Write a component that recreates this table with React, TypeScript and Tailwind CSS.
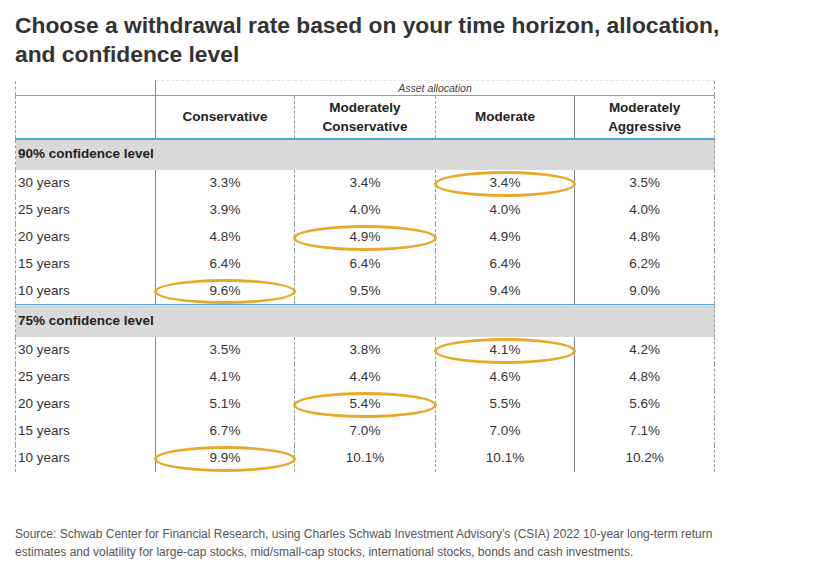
import React from "react";

type Row = { label: string; values: string[]; circled?: number };

const groups: { title: string; rows: Row[] }[] = [
  {
    title: "90% confidence level",
    rows: [
      { label: "30 years", values: ["3.3%", "3.4%", "3.4%", "3.5%"], circled: 2 },
      { label: "25 years", values: ["3.9%", "4.0%", "4.0%", "4.0%"] },
      { label: "20 years", values: ["4.8%", "4.9%", "4.9%", "4.8%"], circled: 1 },
      { label: "15 years", values: ["6.4%", "6.4%", "6.4%", "6.2%"] },
      { label: "10 years", values: ["9.6%", "9.5%", "9.4%", "9.0%"], circled: 0 },
    ],
  },
  {
    title: "75% confidence level",
    rows: [
      { label: "30 years", values: ["3.5%", "3.8%", "4.1%", "4.2%"], circled: 2 },
      { label: "25 years", values: ["4.1%", "4.4%", "4.6%", "4.8%"] },
      { label: "20 years", values: ["5.1%", "5.4%", "5.5%", "5.6%"], circled: 1 },
      { label: "15 years", values: ["6.7%", "7.0%", "7.0%", "7.1%"] },
      { label: "10 years", values: ["9.9%", "10.1%", "10.1%", "10.2%"], circled: 0 },
    ],
  },
];

// right border for each value column (style set per side so bottom borders stay solid)
const colBorders = [
  "border-r [border-right-style:dashed] border-r-[#9a9a9a]",
  "border-r [border-right-style:dashed] border-r-[#9a9a9a]",
  "border-r [border-right-style:solid] border-r-[#7d8790]",
  "",
];

export default function App() {
  return (
    <div className="w-[817px] h-[572px] bg-white text-[#333] font-['Liberation_Sans',Arial,sans-serif] overflow-hidden">
      <h1 className="pl-[15px] pt-[11px] text-[22.8px] leading-[29px] font-bold text-[#333]">
        Choose a withdrawal rate based on your time horizon, allocation,
        <br />
        and confidence level
      </h1>

      <table className="ml-[15px] mt-[11px] w-[699px] table-fixed border-collapse text-[13.5px] border-l border-r border-dashed border-[#9a9a9a]">
        <colgroup>
          <col className="w-[140px]" />
          <col className="w-[139px]" />
          <col className="w-[141px]" />
          <col className="w-[139px]" />
          <col className="w-[140px]" />
        </colgroup>
        <thead>
          <tr className="h-[15px]">
            <th className="border-r border-solid border-r-[#7d8790] border-b border-b-[#5aaed6] p-0" />
            <th
              colSpan={4}
              className="p-0 border-t [border-top-style:dashed] border-t-[#e4e4e4] border-b border-b-[#5aaed6] text-[10.5px] leading-[13px] italic font-normal text-[#444] text-center"
            >
              Asset allocation
            </th>
          </tr>
          <tr className="h-[43px]">
            <th className="p-0 border-r border-solid border-r-[#7d8790] border-b-2 border-b-[#4aa6d6]" />
            {["Conservative", "Moderately\nConservative", "Moderate", "Moderately\nAggressive"].map((h, i) => (
              <th
                key={h}
                className={`p-0 font-bold text-center leading-[19px] whitespace-pre-line text-[#222] border-b-2 [border-bottom-style:solid] border-b-[#4aa6d6] ${colBorders[i]}`}
              >
                {h}
              </th>
            ))}
          </tr>
        </thead>
        {groups.map((g, gi) => (
          <tbody key={g.title}>
            <tr className={`${gi > 0 ? "h-[32px]" : "h-[31px]"} bg-[#d9d9d9]`}>
              <td
                colSpan={5}
                className={`pl-[2px] font-bold text-[#222] ${gi > 0 ? "border-t [border-top-style:solid] border-t-[#5aaed6]" : ""}`}
              >
                {g.title}
              </td>
            </tr>
            {g.rows.map((r) => (
              <tr key={r.label} className="h-[27px]">
                <td className="pl-[2px] border-r border-solid border-r-[#7d8790] text-[#333]">{r.label}</td>
                {r.values.map((v, i) => (
                  <td key={i} className={`relative text-center text-[#333] ${colBorders[i]}`}>
                    {r.circled === i && (
                      <span className="absolute left-[-2px] right-[-2px] top-[1px] bottom-[0px] rounded-[50%] border-[3px] border-[#e9a82b]" />
                    )}
                    <span className="relative">{v}</span>
                  </td>
                ))}
              </tr>
            ))}
          </tbody>
        ))}
      </table>

      <div className="pl-[15px] mt-[53px] text-[12px] leading-[18px] text-[#555]">
        <p>
          Source: Schwab Center for Financial Research, using Charles Schwab Investment Advisory’s (CSIA) 2022 10-year long-term return
        </p>
        <p>estimates and volatility for large-cap stocks, mid/small-cap stocks, international stocks, bonds and cash investments.</p>
      </div>
    </div>
  );
}
